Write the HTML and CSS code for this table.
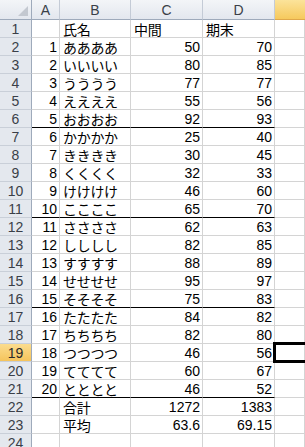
FILE: index.html
```html
<!DOCTYPE html>
<html lang="ja">
<head>
<meta charset="utf-8">
<link rel="stylesheet" href="styles.css">
</head>
<body>
<div class="sheet" id="sheet">
  <div class="hd corner"><span class="tri"></span></div>
  <div class="hd col">A</div>
  <div class="hd col">B</div>
  <div class="hd col">C</div>
  <div class="hd col">D</div>
  <div class="hd col sel"></div>
</div>
<script src="script.js"></script>
</body>
</html>
```

FILE: script.js
```js
(function () {
  var names = ["ああああ","いいいい","うううう","ええええ","おおおお","かかかか","きききき","くくくく","けけけけ","ここここ","ささささ","しししし","すすすす","せせせせ","そそそそ","たたたた","ちちちち","つつつつ","てててて","とととと"];
  var mid = [50,80,77,55,92,25,30,32,46,65,62,82,88,95,75,84,82,46,60,46];
  var fin = [70,85,77,56,93,40,45,33,60,70,63,85,89,97,83,82,80,56,67,52];
  var rows = [["","氏名","中間","期末"]];
  for (var i = 0; i < 20; i++) rows.push([String(i + 1), names[i], String(mid[i]), String(fin[i])]);
  rows.push(["","合計","1272","1383"]);
  rows.push(["","平均","63.6","69.15"]);
  rows.push(["","","",""]);
  var s = document.getElementById("sheet");
  var thick = {6:1, 11:1, 16:1, 21:1};
  rows.forEach(function (r, idx) {
    var n = idx + 1;
    var h = document.createElement("div");
    h.className = "hd row" + (n === 19 ? " sel" : "");
    h.textContent = n;
    s.appendChild(h);
    r.forEach(function (v, c) {
      var d = document.createElement("div");
      var cls = "cell";
      if (c === 0 || ((c === 2 || c === 3) && n > 1)) cls += " num";
      if (c === 1 || (n === 1 && c > 0)) cls += " txt";
      if (thick[n]) cls += " line";
      d.className = cls;
      d.textContent = v;
      s.appendChild(d);
    });
    var e = document.createElement("div");
    e.className = "cell" + (n === 19 ? " active" : "");
    s.appendChild(e);
  });
})();
```

FILE: styles.css
```css
html, body {
  margin: 0;
  padding: 0;
  background: #ffffff;
  overflow: hidden;
}
.sheet {
  display: grid;
  grid-template-columns: 32px 28px 71px 72px 72px 30px;
  grid-template-rows: 20px;
  grid-auto-rows: 18px;
  font-family: "Liberation Sans", "Noto Sans CJK JP", sans-serif;
  font-size: 14px;
  line-height: 16px;
  color: #000;
}
.hd {
  box-sizing: border-box;
  background: linear-gradient(#f3f5f8, #e3e7ee);
  border-right: 1px solid #c4cbd6;
  border-bottom: 1px solid #c4cbd6;
  color: #3a3f48;
  font-family: "Liberation Sans", sans-serif;
  font-size: 14px;
  line-height: 16px;
  display: flex;
  align-items: center;
  justify-content: center;
  overflow: hidden;
}
.hd.col {
  border-bottom: 1px solid #9eaabb;
  padding-top: 1px;
}
.hd.row {
  background: #e4e8ee;
  border-right: 1px solid #9eaabb;
  border-bottom: 1px solid #c9cfd8;
  padding-top: 1px;
}
.hd.col.sel {
  background: linear-gradient(#fbe39a, #f6c95d);
  border-bottom-color: #e0a84a;
  border-right: none;
}
.hd.row.sel {
  background: linear-gradient(#fbdc8e, #f5c45c);
  color: #2b2b2b;
}
.corner {
  position: relative;
  border-right: 1px solid #9eaabb;
  border-bottom: 1px solid #9eaabb;
}
.tri {
  position: absolute;
  right: 3px;
  bottom: 3px;
  width: 0;
  height: 0;
  border-left: 10px solid transparent;
  border-bottom: 10px solid #c3c8d0;
}
.cell {
  box-sizing: border-box;
  border-right: 1px solid #d4d4d4;
  border-bottom: 1px solid #d4d4d4;
  display: flex;
  align-items: center;
  white-space: nowrap;
  overflow: hidden;
  padding-top: 1px;
  line-height: 16px;
}
.num {
  justify-content: flex-end;
  padding-right: 2px;
}
.txt {
  justify-content: flex-start;
  padding-left: 3px;
  font-family: "Noto Sans CJK JP", sans-serif;
  font-size: 14px;
  line-height: 16px;
  letter-spacing: -0.3px;
}
.line {
  border-bottom: 1px solid #000;
}
.active {
  position: relative;
  overflow: visible;
}
.active::after {
  content: "";
  position: absolute;
  top: -2px;
  left: -2px;
  right: -6px;
  bottom: -2px;
  border: 3px solid #000;
}
```
